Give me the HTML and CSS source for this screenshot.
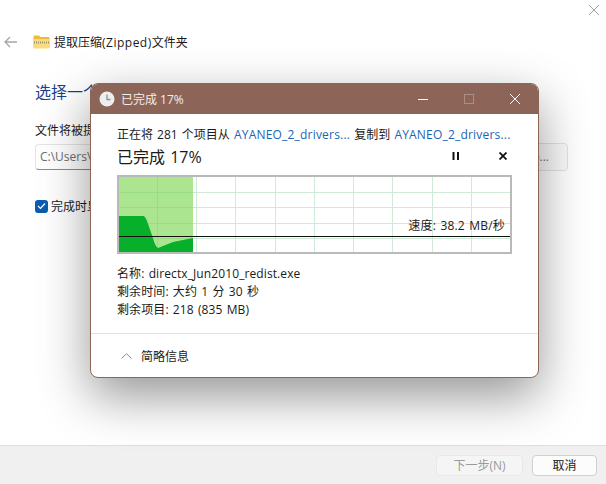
FILE: index.html
```html
<!DOCTYPE html>
<html lang="zh-CN">
<head>
    <meta charset="UTF-8">
    <meta name="viewport" content="width=device-width, initial-scale=1.0">
    <title>提取压缩(Zipped)文件夹</title>
    <link rel="stylesheet" href="styles.css">
</head>
<body>
    <div class="wizard">
        <div class="wizard-close">
            <svg width="10" height="10" viewBox="0 0 10 10"><path d="M0 0L10 10M10 0L0 10" stroke="#8c8c8c" stroke-width="0.8" fill="none"/></svg>
        </div>
        <div class="wizard-head">
            <svg class="back-arrow" width="14" height="12" viewBox="0 0 14 12"><path d="M13 6H1M6 1L1 6L6 11" stroke="#a6a6a6" stroke-width="1.3" fill="none"/></svg>
            <svg class="zip-icon" width="17" height="15" viewBox="0 0 17 15">
                <path d="M0.5 2.5a1 1 0 0 1 1-1h4.5l1.5 1.5h8a1 1 0 0 1 1 1v9a1 1 0 0 1-1 1h-14a1 1 0 0 1-1-1z" fill="#f0b93a"/>
                <rect x="0.5" y="5" width="16" height="9.5" rx="1" fill="#fbdc7c"/>
                <path d="M1 8.5h15" stroke="#9a9276" stroke-width="2" stroke-dasharray="1 1"/>
            </svg>
            <span>提取压缩<span class="wide">(Zipped)</span>文件夹</span>
        </div>
        <div class="wizard-body">
            <h1>选择一个目标并提取文件</h1>
            <p class="field-label">文件将被提取到这个文件夹:</p>
            <div class="path-row">
                <div class="path-input">C:\Users\</div>
                <div class="browse-btn">浏览(R)...</div>
            </div>
            <div class="check-row">
                <span class="check-box">
                    <svg width="9" height="8" viewBox="0 0 9 8"><path d="M1 4L3.5 6.5L8 1.5" stroke="#fff" stroke-width="1.2" fill="none"/></svg>
                </span>
                <span>完成时显示提取的文件</span>
            </div>
        </div>
        <div class="wizard-foot">
            <div class="foot-btn next-btn">下一步(N)</div>
            <div class="foot-btn cancel-btn">取消</div>
        </div>
    </div>

    <!-- 复制进度对话框 -->
    <div class="dialog">
        <div class="dialog-title">
            <svg class="clock" width="16" height="16" viewBox="0 0 16 16">
                <circle cx="8" cy="8" r="7.5" fill="#eeeeee"/>
                <path d="M8 3.5V8.5H11.5" stroke="#8f8f8f" stroke-width="1.3" fill="none"/>
            </svg>
            <span class="title-text">已完成 17%</span>
            <div class="win-controls">
                <svg width="10" height="10" viewBox="0 0 10 10"><path d="M0 5.5H10" stroke="#fff" stroke-width="1" fill="none"/></svg>
                <svg width="10" height="10" viewBox="0 0 10 10"><rect x="0.5" y="0.5" width="9" height="9" stroke="#a98f85" fill="none"/></svg>
                <svg width="10" height="10" viewBox="0 0 10 10"><path d="M0 0L10 10M10 0L0 10" stroke="#fff" stroke-width="1" fill="none"/></svg>
            </div>
        </div>
        <div class="dialog-main">
            <p class="copy-line">正在将 281 个项目从 <span class="link">AYANEO_2_drivers...</span> 复制到 <span class="link">AYANEO_2_drivers...</span></p>
            <div class="progress-head">
                <span class="progress-title">已完成 17%</span>
                <div class="progress-actions">
                    <svg width="8" height="8" viewBox="0 0 8 8"><path d="M1.5 0V8M6 0V8" stroke="#111" stroke-width="2" fill="none"/></svg>
                    <svg width="8" height="8" viewBox="0 0 8 8"><path d="M0.5 0.5L7.5 7.5M7.5 0.5L0.5 7.5" stroke="#111" stroke-width="1.8" fill="none"/></svg>
                </div>
            </div>
            <div class="graph">
                <svg width="391" height="75" viewBox="0 0 391 75">
                    <rect x="0" y="0" width="74" height="75" fill="#abe58f"/>
                    <path d="M77.500 0V75M116.500 0V75M156.500 0V75M195.500 0V75M234.500 0V75M273.500 0V75M313.500 0V75M352.500 0V75M74 15.500H391M74 30.500H391M74 46.500H391M74 61.500H391" stroke="#cfebd7" stroke-width="1" fill="none"/>
                    <path d="M38.500 0V75M0 15.500H74M0 30.500H74M0 46.500H74M0 61.500H74" stroke="#9bdd84" stroke-width="1" fill="none"/>
                    <path d="M0 39H24Q26 39 28 44L34 61Q36 69 39 71L54 65L74 61V75H0Z" fill="#07af2a"/>
                    <path d="M0 59.500H391" stroke="#111" stroke-width="1" fill="none"/>
                </svg>
                <span class="speed">速度: 38.2 MB/秒</span>
            </div>
            <div class="info">
                <p>名称: directx_Jun2010_redist.exe</p>
                <p>剩余时间: 大约 1 分 30 秒</p>
                <p>剩余项目: 218 (835 MB)</p>
            </div>
        </div>
        <div class="dialog-foot">
            <svg width="11" height="6" viewBox="0 0 11 6"><path d="M0.500 5.500L5.500 0.700L10.500 5.500" stroke="#8a8a8a" stroke-width="1" fill="none"/></svg>
            <span>简略信息</span>
        </div>
    </div>
</body>
</html>
```

FILE: styles.css
```css
* {
    box-sizing: border-box;
}

html, body {
    margin: 0;
    padding: 0;
}

body {
    position: relative;
    width: 606px;
    height: 484px;
    overflow: hidden;
    background-color: #fff;
    font-family: "Open Sans", "Noto Sans CJK SC", sans-serif;
    font-size: 12px;
    color: #1a1a1a;
}

p {
    margin: 0;
}

.wide {
    letter-spacing: 0.5px;
}

.wizard {
    display: flex;
    flex-direction: column;
    height: 484px;
}

.wizard-close {
    display: flex;
    justify-content: flex-end;
    height: 33px;
    padding: 5px 7px 0 0;
}

.wizard-head {
    display: flex;
    align-items: center;
    height: 17px;
    padding-left: 4px;
}

.back-arrow {
    margin-right: 15px;
}

.zip-icon {
    margin-right: 4px;
}

.wizard-body {
    flex: 1;
    padding: 0 38px 0 35px;
}

.wizard-body h1 {
    margin: 30px 0 0;
    font-size: 16px;
    font-weight: 400;
    line-height: 24px;
    color: #1a3f8f;
}

.field-label {
    margin-top: 18px;
    line-height: 18px;
}

.path-row {
    display: flex;
    gap: 10px;
    align-items: center;
    margin-top: 3px;
}

.path-input {
    flex: 1;
    height: 26px;
    padding: 3px 4px;
    border: 1px solid #e5e5e5;
    border-bottom-color: #8c8c8c;
    border-radius: 4px;
    color: #6e6e6e;
}

.browse-btn {
    width: 98px;
    height: 28px;
    line-height: 26px;
    text-align: right;
    padding-right: 18px;
    border: 1px solid #e3e3e3;
    border-radius: 4px;
    background-color: #fbfbfb;
    color: #777;
}

.check-row {
    display: flex;
    align-items: center;
    gap: 3px;
    margin-top: 26px;
}

.check-box {
    display: flex;
    align-items: center;
    justify-content: center;
    width: 13px;
    height: 13px;
    border-radius: 3px;
    background-color: #0a5cb0;
}

.wizard-foot {
    display: flex;
    justify-content: flex-end;
    align-items: center;
    gap: 9px;
    height: 39px;
    padding-right: 9px;
    background-color: #f0f0f0;
    border-top: 1px solid #dfdfdf;
}

.foot-btn {
    height: 21px;
    line-height: 19px;
    text-align: center;
    border-radius: 4px;
    border: 1px solid #d0d0d0;
}

.next-btn {
    width: 87px;
    color: #9a9a9a;
    background-color: #f5f5f5;
    border-color: #e8e8e8;
}

.cancel-btn {
    width: 65px;
    background-color: #fcfcfc;
}

.dialog {
    position: absolute;
    left: 90px;
    top: 83px;
    width: 449px;
    height: 295px;
    display: flex;
    flex-direction: column;
    background-color: #fff;
    border: 1px solid #8c6558;
    border-radius: 8px;
    box-shadow: 0 18px 50px rgba(0, 0, 0, 0.42);
    overflow: hidden;
}

.dialog-title {
    display: flex;
    align-items: center;
    height: 30px;
    padding-left: 8px;
    background-color: #8c6558;
    color: #f3eeec;
}

.clock {
    margin-right: 6px;
}

.title-text {
    flex: 1;
}

.win-controls {
    display: flex;
    gap: 36px;
    padding-right: 18px;
}

.dialog-main {
    flex: 1;
    padding: 12px 26px 0;
}

.copy-line {
    line-height: 18px;
    white-space: nowrap;
    word-spacing: 1px;
}

.link {
    color: #1a66b3;
    letter-spacing: 0.2px;
}

.progress-head {
    display: flex;
    align-items: center;
    justify-content: space-between;
    height: 24px;
    word-spacing: 1px;
}

.progress-title {
    font-size: 16px;
}

.progress-actions {
    display: flex;
    gap: 39px;
    padding-right: 5px;
}

.graph {
    position: relative;
    width: 395px;
    height: 79px;
    margin-top: 7px;
    border: 2px solid #b9b9b9;
}

.graph svg {
    display: block;
}

.speed {
    position: absolute;
    right: 5px;
    top: 40px;
    line-height: 18px;
    word-spacing: 1px;
    letter-spacing: 0.2px;
}

.info {
    margin-top: 11px;
    line-height: 18px;
    word-spacing: 1px;
    letter-spacing: 0.1px;
}

.dialog-foot {
    display: flex;
    align-items: center;
    gap: 9px;
    height: 44px;
    padding-left: 30px;
    border-top: 1px solid #e2e2e2;
}
```
